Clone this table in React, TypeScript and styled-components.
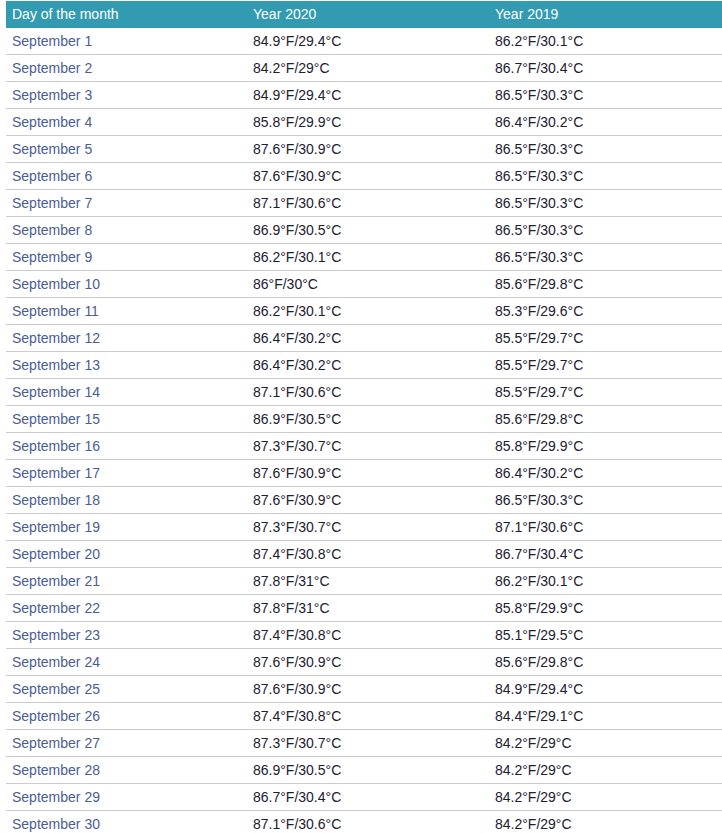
import React from 'react';
import styled, { createGlobalStyle } from 'styled-components';

const GlobalStyle = createGlobalStyle`
  html, body {
    margin: 0;
    padding: 0;
    background: #fff;
    overflow: hidden;
  }
  body {
    font-family: "Liberation Sans", Arial, sans-serif;
  }
`;

const Page = styled.div`
  padding: 1px 0 0 6px;
  width: 730px;
`;

const Table = styled.table`
  width: 726px;
  border-collapse: collapse;
  table-layout: fixed;
  font-size: 14px;
`;

const HeadCell = styled.th<{ $w?: number }>`
  background: #339bb1;
  color: #fff;
  font-weight: normal;
  text-align: left;
  height: 26px;
  padding: 0 6px 1px;
  line-height: 16px;
  width: ${p => (p.$w ? `${p.$w}px` : 'auto')};
`;

const Row = styled.tr`
  border-bottom: 1px solid #cbcbcb;
`;

const Cell = styled.td<{ $day?: boolean }>`
  height: 26px;
  padding: 0 6px;
  line-height: 16px;
  color: ${p => (p.$day ? '#4a5d96' : '#1b2030')};
`;

const data: [string, string][] = [
  ['84.9°F/29.4°C', '86.2°F/30.1°C'],
  ['84.2°F/29°C', '86.7°F/30.4°C'],
  ['84.9°F/29.4°C', '86.5°F/30.3°C'],
  ['85.8°F/29.9°C', '86.4°F/30.2°C'],
  ['87.6°F/30.9°C', '86.5°F/30.3°C'],
  ['87.6°F/30.9°C', '86.5°F/30.3°C'],
  ['87.1°F/30.6°C', '86.5°F/30.3°C'],
  ['86.9°F/30.5°C', '86.5°F/30.3°C'],
  ['86.2°F/30.1°C', '86.5°F/30.3°C'],
  ['86°F/30°C', '85.6°F/29.8°C'],
  ['86.2°F/30.1°C', '85.3°F/29.6°C'],
  ['86.4°F/30.2°C', '85.5°F/29.7°C'],
  ['86.4°F/30.2°C', '85.5°F/29.7°C'],
  ['87.1°F/30.6°C', '85.5°F/29.7°C'],
  ['86.9°F/30.5°C', '85.6°F/29.8°C'],
  ['87.3°F/30.7°C', '85.8°F/29.9°C'],
  ['87.6°F/30.9°C', '86.4°F/30.2°C'],
  ['87.6°F/30.9°C', '86.5°F/30.3°C'],
  ['87.3°F/30.7°C', '87.1°F/30.6°C'],
  ['87.4°F/30.8°C', '86.7°F/30.4°C'],
  ['87.8°F/31°C', '86.2°F/30.1°C'],
  ['87.8°F/31°C', '85.8°F/29.9°C'],
  ['87.4°F/30.8°C', '85.1°F/29.5°C'],
  ['87.6°F/30.9°C', '85.6°F/29.8°C'],
  ['87.6°F/30.9°C', '84.9°F/29.4°C'],
  ['87.4°F/30.8°C', '84.4°F/29.1°C'],
  ['87.3°F/30.7°C', '84.2°F/29°C'],
  ['86.9°F/30.5°C', '84.2°F/29°C'],
  ['86.7°F/30.4°C', '84.2°F/29°C'],
  ['87.1°F/30.6°C', '84.2°F/29°C'],
];

export default function App() {
  return (
    <Page>
      <GlobalStyle />
      <Table>
        <thead>
          <tr>
            <HeadCell $w={229}>Day of the month</HeadCell>
            <HeadCell $w={230}>Year 2020</HeadCell>
            <HeadCell>Year 2019</HeadCell>
          </tr>
        </thead>
        <tbody>
          {data.map(([y2020, y2019], i) => (
            <Row key={i}>
              <Cell $day>September {i + 1}</Cell>
              <Cell>{y2020}</Cell>
              <Cell>{y2019}</Cell>
            </Row>
          ))}
        </tbody>
      </Table>
    </Page>
  );
}
